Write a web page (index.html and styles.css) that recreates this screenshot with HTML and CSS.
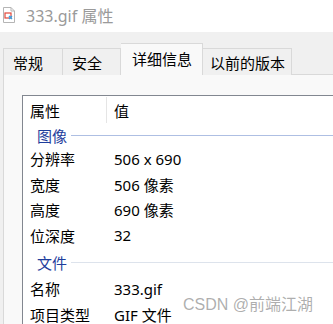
FILE: index.html
```html
<!DOCTYPE html>
<html lang="zh">
<head>
<meta charset="utf-8">
<link rel="stylesheet" href="styles.css">
</head>
<body>
<div class="window">
  <div class="titlebar">
    <svg class="ficon" width="12" height="16" viewBox="0 0 12 16">
      <path d="M0.5 0.5 H8 L11.5 4 V15.5 H0.5 Z" fill="#fff" stroke="#b5b5b5"/>
      <path d="M8 0.5 V4 H11.5" fill="none" stroke="#b5b5b5"/>
      <rect x="2" y="6" width="6" height="5" fill="none" stroke="#e0473a" stroke-width="1.2"/>
      <path d="M6 9 L9 12 M9 9 L6 12" stroke="#3a9ee0" stroke-width="1.4"/>
    </svg>
    <span class="title">333.gif 属性</span>
  </div>
  <div class="body">
    <div class="tabs">
      <div class="tab t1">常规</div>
      <div class="tab t2">安全</div>
      <div class="tab sel">详细信息</div>
      <div class="tab t4">以前的版本</div>
    </div>
    <div class="panel">
      <div class="list">
        <div class="head">
          <div class="c1">属性</div>
          <div class="sep"></div>
          <div class="c2">值</div>
        </div>
        <div class="group"><span>图像</span><i></i></div>
        <div class="row"><div class="k">分辨率</div><div class="v">506 x 690</div></div>
        <div class="row"><div class="k">宽度</div><div class="v">506 像素</div></div>
        <div class="row"><div class="k">高度</div><div class="v">690 像素</div></div>
        <div class="row"><div class="k">位深度</div><div class="v">32</div></div>
        <div class="group g2"><span>文件</span><i></i></div>
        <div class="row"><div class="k">名称</div><div class="v">333.gif</div></div>
        <div class="row"><div class="k">项目类型</div><div class="v">GIF 文件</div></div>
      </div>
    </div>
  </div>
  <div class="watermark">CSDN @前端江湖</div>
</div>
</body>
</html>
```
FILE: styles.css
```css
html, body {
  margin: 0;
  padding: 0;
  overflow: hidden;
}
body {
  width: 333px;
  height: 324px;
  font-family: "Noto Sans", "Noto Sans CJK SC", sans-serif;
  font-size: 15px;
  color: #000;
}
.window {
  position: relative;
  width: 333px;
  height: 324px;
  background: #f0f0f0;
  overflow: hidden;
}
.titlebar {
  height: 32px;
  background: #fff;
  display: flex;
  align-items: center;
  padding-left: 3px;
  box-sizing: border-box;
}
.ficon {
  margin-top: -3px;
}
.title {
  margin-left: 11px;
  font-size: 16px;
  color: #9a9a9a;
  margin-top: -3px;
}
.body {
  padding-left: 3px;
}
.tabs {
  display: flex;
  align-items: flex-end;
  height: 42px;
  position: relative;
  z-index: 1;
}
.tab {
  box-sizing: border-box;
  height: 27px;
  border: 1px solid #d9d9d9;
  border-bottom: none;
  background: #f0f0f0;
  display: flex;
  align-items: center;
  justify-content: flex-start;
  line-height: 1;
  margin-bottom: -1px;
}
.t1 { width: 59px; border-right: none; padding: 2px 0 0 9px; }
.t2 { width: 59px; padding: 2px 0 0 9px; }
.sel {
  width: 82px;
  height: 32px;
  background: #f9f9f9;
  border-left: none;
  border-color: #d9d9d9;
  margin-bottom: -1px;
  padding: 0 0 1px 11px;
}
.t4 { width: 89px; border-left: none; padding: 2px 0 0 7px; }
.panel {
  background: #f9f9f9;
  border-top: 1px solid #d9d9d9;
  border-left: 1px solid #d9d9d9;
  height: 260px;
  padding: 20px 0 0 18px;
  box-sizing: border-box;
}
.list {
  background: #fff;
  border: 1px solid #828790;
  border-right: none;
  height: 300px;
  padding-left: 7px;
}
.head {
  display: flex;
  align-items: center;
  height: 28px;
}
.c1 { width: 76px; }
.sep {
  width: 1px;
  height: 26px;
  background: #e5e5e5;
  margin-top: -1px;
}
.c2 { padding-left: 7px; }
.group {
  display: flex;
  align-items: center;
  height: 22px;
  padding-left: 7px;
  color: #1e3d9c;
}
.group i {
  flex: 1;
  height: 1px;
  background: #aebfe3;
  margin-left: 4px;
}
.g2 { height: 28px; }
.g2 i { background: #dde3ec; }
.row {
  display: flex;
  align-items: center;
  height: 25.5px;
}
.k { width: 84px; }
.watermark {
  position: absolute;
  left: 183px;
  top: 291px;
  font-size: 16px;
  color: rgba(120, 120, 120, 0.6);
  font-family: "Liberation Sans", "Noto Sans CJK SC", sans-serif;
}
```
